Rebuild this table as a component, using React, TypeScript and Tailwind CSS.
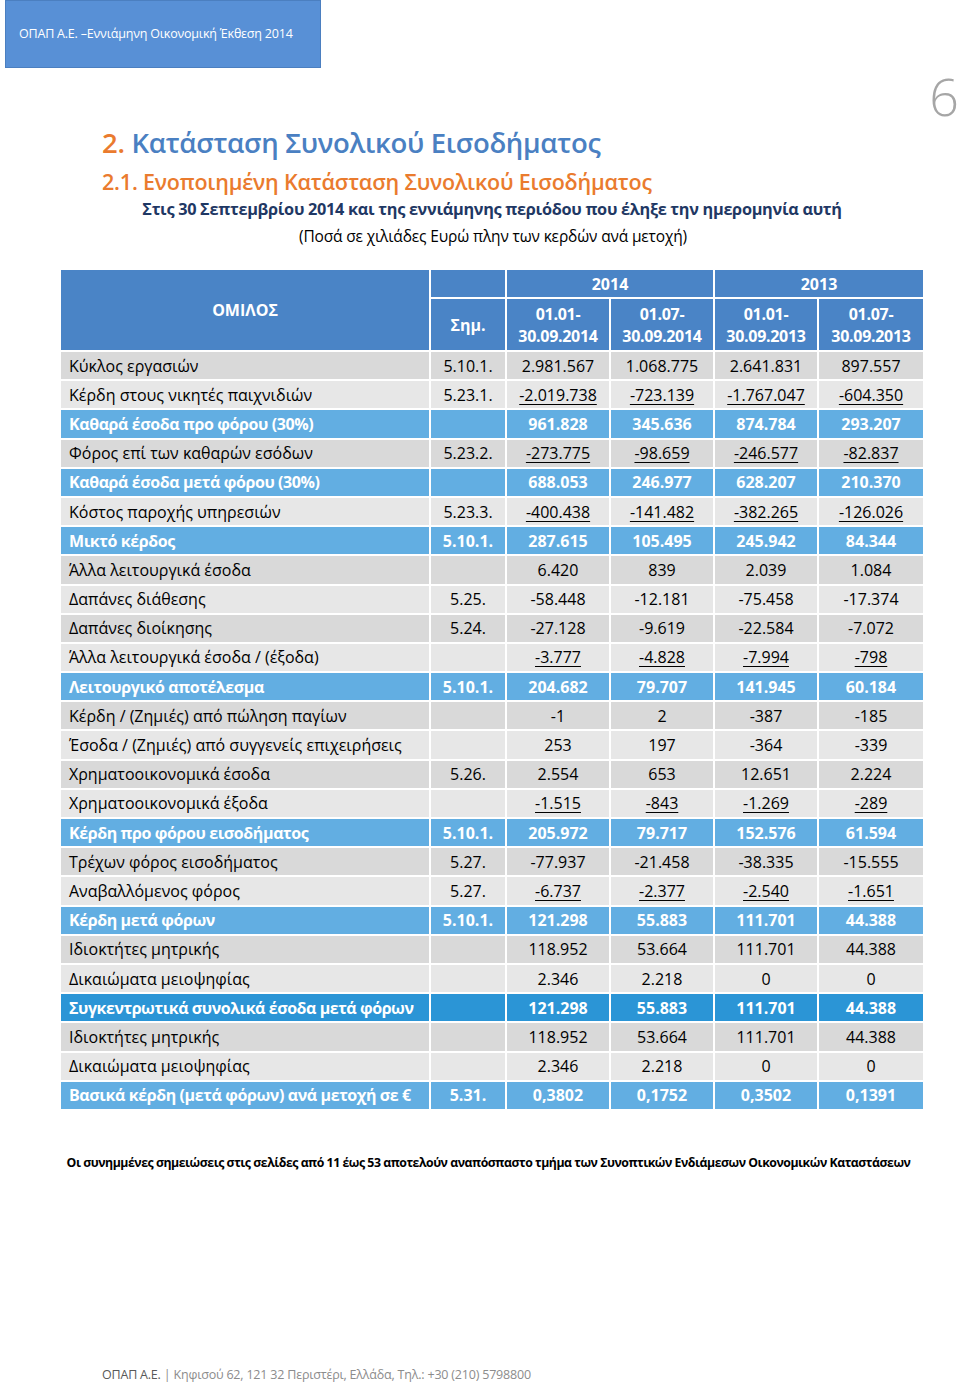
import React from "react";

type Kind = "g" | "b" | "d";
type Row = { label: string; note: string; vals: string[]; u?: boolean; kind?: Kind };

const rows: Row[] = [
  { label: "Κύκλος εργασιών", note: "5.10.1.", vals: ["2.981.567", "1.068.775", "2.641.831", "897.557"] },
  { label: "Κέρδη στους νικητές παιχνιδιών", note: "5.23.1.", vals: ["-2.019.738", "-723.139", "-1.767.047", "-604.350"], u: true },
  { label: "Καθαρά έσοδα προ φόρου (30%)", note: "", vals: ["961.828", "345.636", "874.784", "293.207"], kind: "b" },
  { label: "Φόρος επί των καθαρών εσόδων", note: "5.23.2.", vals: ["-273.775", "-98.659", "-246.577", "-82.837"], u: true },
  { label: "Καθαρά έσοδα μετά φόρου (30%)", note: "", vals: ["688.053", "246.977", "628.207", "210.370"], kind: "b" },
  { label: "Κόστος παροχής υπηρεσιών", note: "5.23.3.", vals: ["-400.438", "-141.482", "-382.265", "-126.026"], u: true },
  { label: "Μικτό κέρδος", note: "5.10.1.", vals: ["287.615", "105.495", "245.942", "84.344"], kind: "b" },
  { label: "Άλλα λειτουργικά έσοδα", note: "", vals: ["6.420", "839", "2.039", "1.084"] },
  { label: "Δαπάνες διάθεσης", note: "5.25.", vals: ["-58.448", "-12.181", "-75.458", "-17.374"] },
  { label: "Δαπάνες διοίκησης", note: "5.24.", vals: ["-27.128", "-9.619", "-22.584", "-7.072"] },
  { label: "Άλλα λειτουργικά έσοδα / (έξοδα)", note: "", vals: ["-3.777", "-4.828", "-7.994", "-798"], u: true },
  { label: "Λειτουργικό αποτέλεσμα", note: "5.10.1.", vals: ["204.682", "79.707", "141.945", "60.184"], kind: "b" },
  { label: "Κέρδη / (Ζημιές) από πώληση παγίων", note: "", vals: ["-1", "2", "-387", "-185"] },
  { label: "Έσοδα / (Ζημιές) από συγγενείς επιχειρήσεις", note: "", vals: ["253", "197", "-364", "-339"] },
  { label: "Χρηματοοικονομικά έσοδα", note: "5.26.", vals: ["2.554", "653", "12.651", "2.224"] },
  { label: "Χρηματοοικονομικά έξοδα", note: "", vals: ["-1.515", "-843", "-1.269", "-289"], u: true },
  { label: "Κέρδη προ φόρου εισοδήματος", note: "5.10.1.", vals: ["205.972", "79.717", "152.576", "61.594"], kind: "b" },
  { label: "Τρέχων φόρος εισοδήματος", note: "5.27.", vals: ["-77.937", "-21.458", "-38.335", "-15.555"] },
  { label: "Αναβαλλόμενος φόρος", note: "5.27.", vals: ["-6.737", "-2.377", "-2.540", "-1.651"], u: true },
  { label: "Κέρδη μετά φόρων", note: "5.10.1.", vals: ["121.298", "55.883", "111.701", "44.388"], kind: "b" },
  { label: "Ιδιοκτήτες μητρικής", note: "", vals: ["118.952", "53.664", "111.701", "44.388"] },
  { label: "Δικαιώματα μειοψηφίας", note: "", vals: ["2.346", "2.218", "0", "0"] },
  { label: "Συγκεντρωτικά συνολικά έσοδα μετά φόρων", note: "", vals: ["121.298", "55.883", "111.701", "44.388"], kind: "d" },
  { label: "Ιδιοκτήτες μητρικής", note: "", vals: ["118.952", "53.664", "111.701", "44.388"] },
  { label: "Δικαιώματα μειοψηφίας", note: "", vals: ["2.346", "2.218", "0", "0"] },
  { label: "Βασικά κέρδη (μετά φόρων) ανά μετοχή σε €", note: "5.31.", vals: ["0,3802", "0,1752", "0,3502", "0,1391"], kind: "b" },
];

const font = { fontFamily: '"Open Sans", "Noto Sans", sans-serif' };

export default function App() {
  let grayIdx = 0;
  const rendered = rows.map((r, i) => {
    let bg = "";
    let txt = "text-black";
    let lab = "";
    if (r.kind === "b") {
      bg = "bg-[#62aee2]";
      txt = "text-white font-bold";
      lab = "tracking-[-0.4px]";
    } else if (r.kind === "d") {
      bg = "bg-[#2b95d6]";
      txt = "text-white font-bold";
      lab = "tracking-[-0.45px]";
    } else {
      bg = grayIdx % 2 === 0 ? "bg-[#d9d9d9]" : "bg-[#e7e7e7]";
      grayIdx++;
    }
    const cell = `${bg} ${txt} h-[27.2px] flex items-center`;
    return (
      <React.Fragment key={i}>
        <div className={`${cell} ${lab} pl-[8px] whitespace-nowrap`}>{r.label}</div>
        <div className={`${cell} justify-center`}>{r.note}</div>
        {r.vals.map((v, j) => (
          <div key={j} className={`${cell} justify-center`}>
            <span className={r.u ? "underline underline-offset-[3px] decoration-1" : ""}>{v}</span>
          </div>
        ))}
      </React.Fragment>
    );
  });

  return (
    <div className="w-[960px] h-[1384px] bg-white flex flex-col overflow-hidden" style={font}>
      <div className="ml-[5px] w-[316px] h-[68px] bg-[#5890d6] border border-[#4b7fc0] flex items-center pl-[13px] text-white text-[12.5px] tracking-[-0.2px]">
        ΟΠΑΠ Α.Ε. –Εννιάμηνη Οικονομική Έκθεση 2014
      </div>
      <div className="h-[56px] flex justify-end items-center text-[52px] leading-[56px] text-[#a6a6a6] font-light pr-[1px]">
        6
      </div>
      <div className="pl-[102px] text-[27.5px] leading-[34px] font-semibold text-[#4a80c2] mt-[2px] tracking-[-0.3px]">
        <span className="text-[#ea7b2e]">2.</span> Κατάσταση Συνολικού Εισοδήματος
      </div>
      <div className="pl-[102px] mt-[8px] text-[21.5px] leading-[28px] font-semibold text-[#ea7b2e] tracking-[-0.2px]">
        2.1. Ενοποιημένη Κατάσταση Συνολικού Εισοδήματος
      </div>
      <div className="pl-[24px] text-center text-[16.3px] leading-[22px] font-bold text-[#1f3864] mt-[2px] tracking-[-0.3px]">
        Στις 30 Σεπτεμβρίου 2014 και της εννιάμηνης περιόδου που έληξε την ημερομηνία αυτή
      </div>
      <div className="pl-[26px] text-center text-[15.5px] leading-[22px] text-black mt-[5px] tracking-[-0.15px]">
        (Ποσά σε χιλιάδες Ευρώ πλην των κερδών ανά μετοχή)
      </div>

      <div className="ml-[61px] mt-[23px] w-[862px] grid grid-cols-[368px_74px_102px_102px_102px_104px] grid-rows-[27px_51px] auto-rows-[27.2px] gap-[2px] text-[16px]">
        <div className="row-span-2 bg-[#4a84c6] text-white font-bold flex items-center justify-center pb-[1px]">
          ΟΜΙΛΟΣ
        </div>
        <div className="bg-[#4a84c6]" />
        <div className="col-span-2 bg-[#4a84c6] text-white font-bold flex items-center justify-center">2014</div>
        <div className="col-span-2 bg-[#4a84c6] text-white font-bold flex items-center justify-center">2013</div>
        <div className="bg-[#4a84c6] text-white font-bold flex items-center justify-center">Σημ.</div>
        {["30.09.2014", "30.09.2014", "30.09.2013", "30.09.2013"].map((d, i) => (
          <div
            key={i}
            className="bg-[#4a84c6] text-white font-bold flex flex-col items-center justify-center leading-[22px] tracking-[-0.3px]"
          >
            <span>{i % 2 === 0 ? "01.01-" : "01.07-"}</span>
            <span>{d}</span>
          </div>
        ))}
        {rendered}
      </div>

      <div className="mt-[45px] pl-[17px] text-center text-[12.3px] font-bold text-black tracking-[-0.47px]">
        Οι συνημμένες σημειώσεις στις σελίδες από 11 έως 53 αποτελούν αναπόσπαστο τμήμα των Συνοπτικών Ενδιάμεσων Οικονομικών Καταστάσεων
      </div>

      <div className="mt-auto mb-[1px] pl-[102px] text-[12.5px] leading-[16px] text-[#8c8c8c] tracking-[-0.2px]">
        <span className="text-[#595959]">ΟΠΑΠ Α.Ε.</span> | Κηφισού 62, 121 32 Περιστέρι, Ελλάδα, Τηλ.: +30 (210) 5798800
      </div>
    </div>
  );
}
